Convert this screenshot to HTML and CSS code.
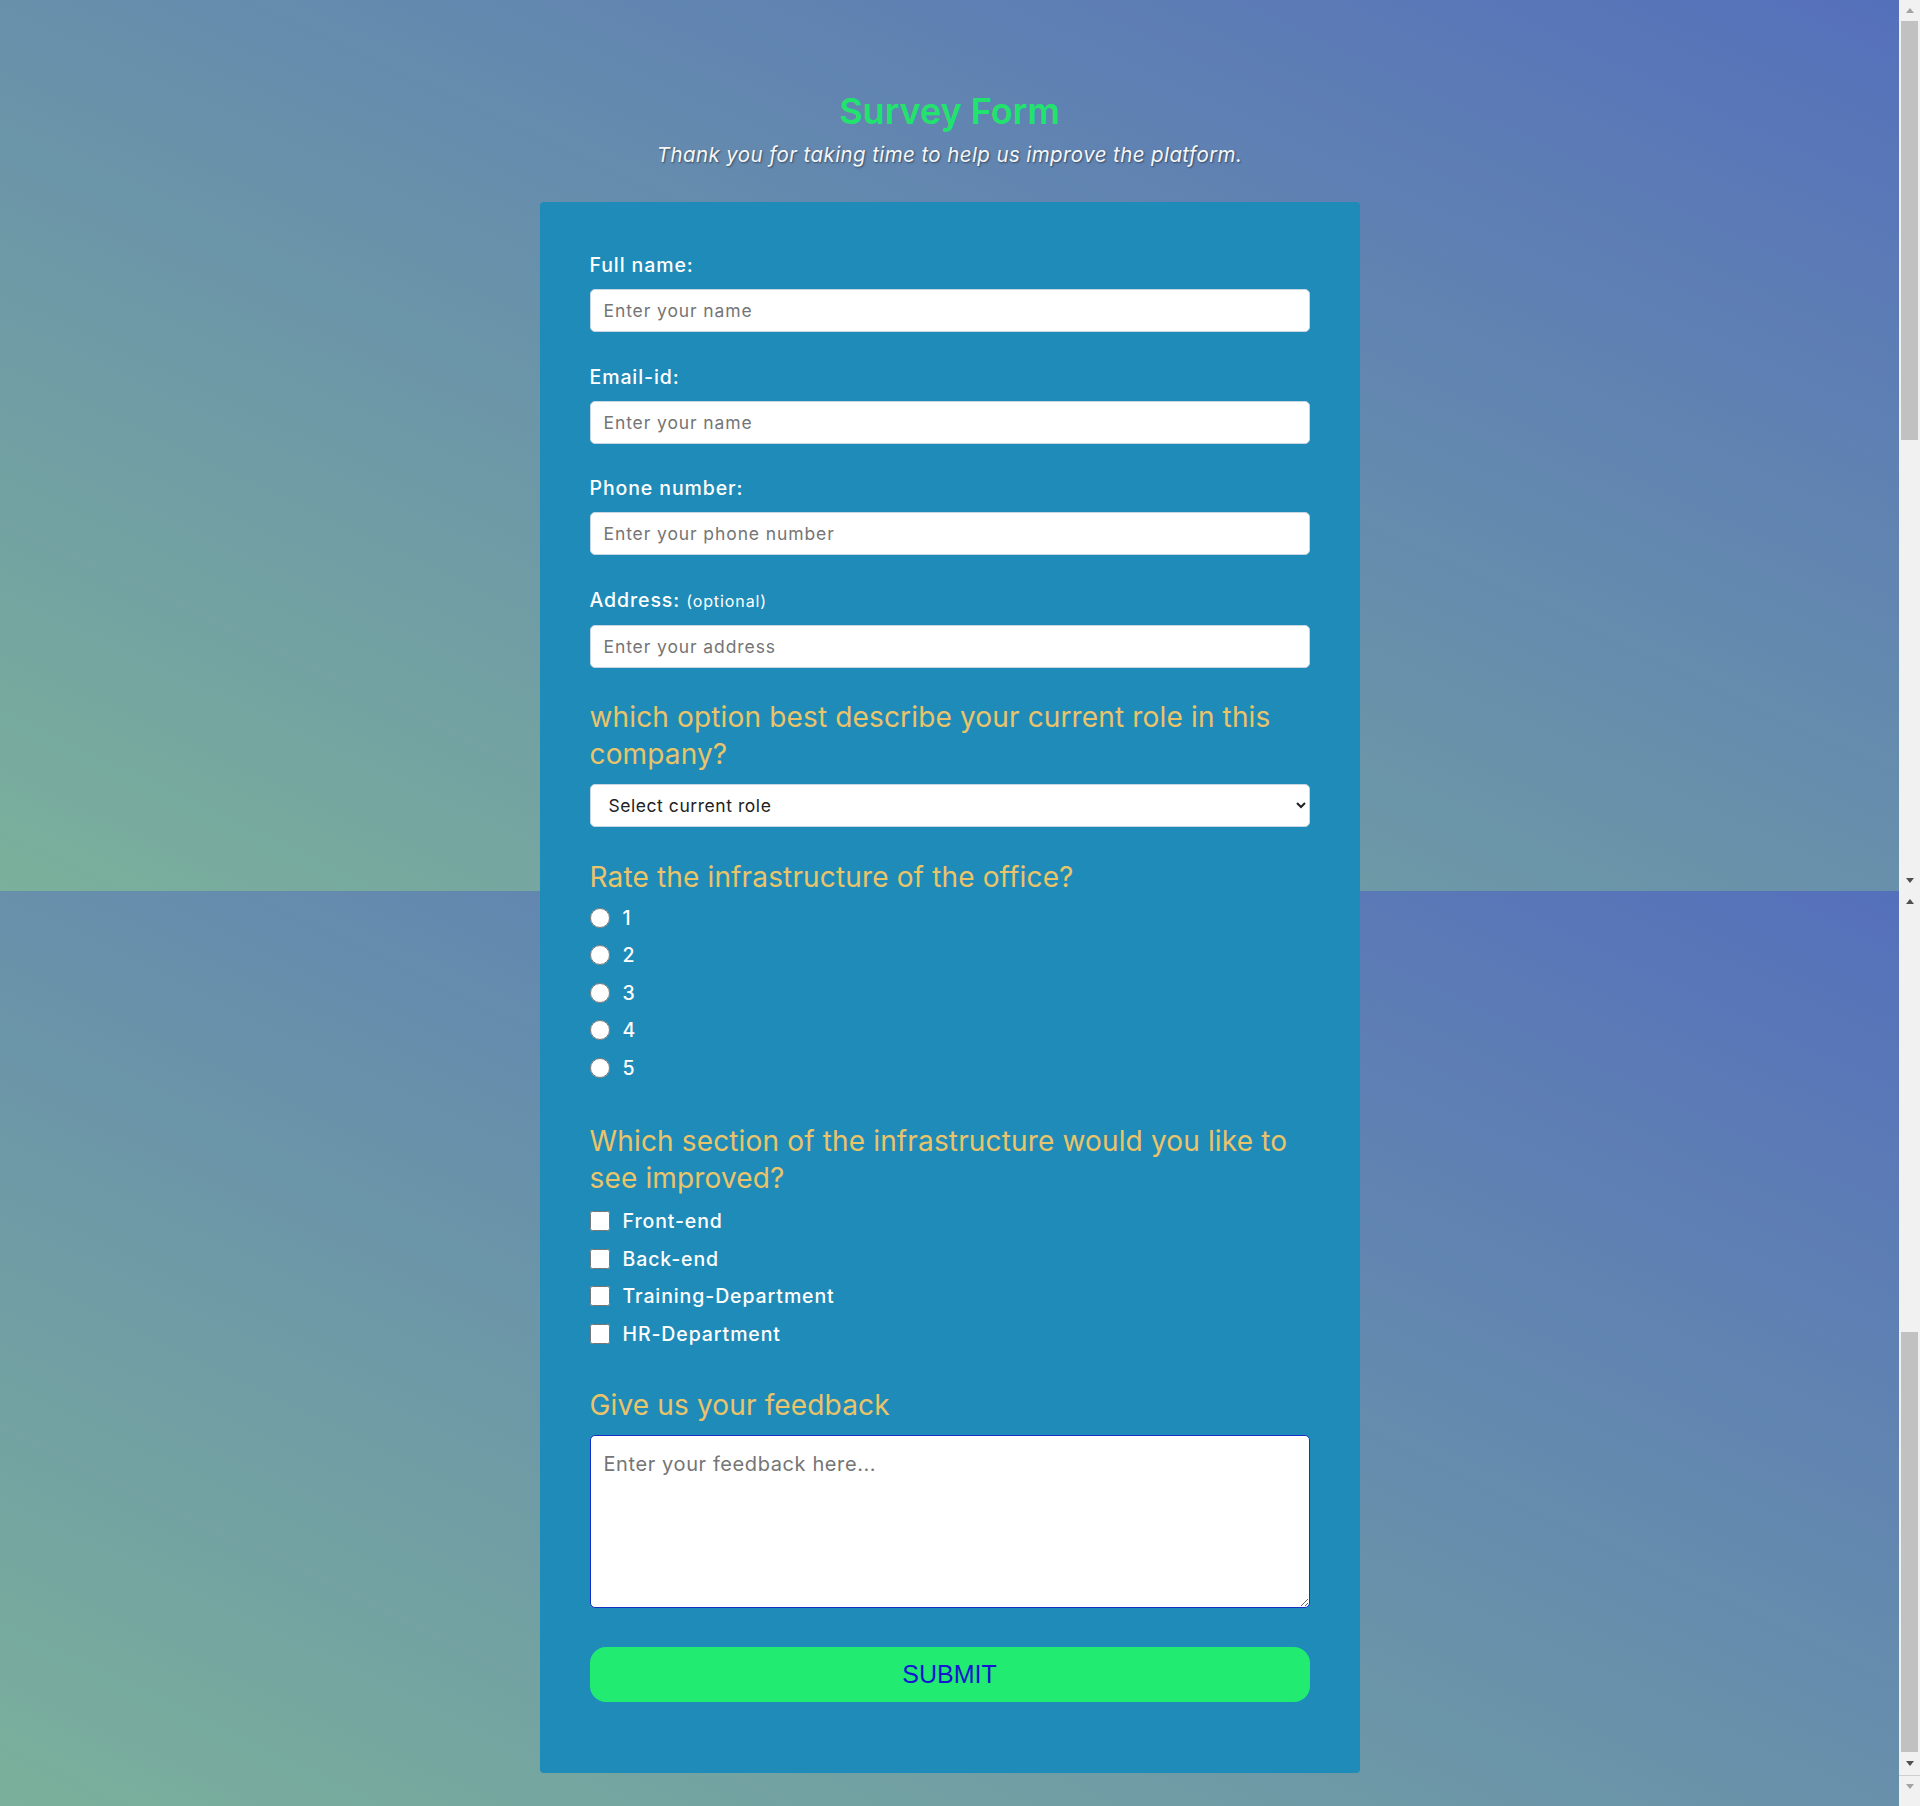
FILE: index.html
```html
<!DOCTYPE html>
<html lang="en">
<head>
<meta charset="utf-8">
<title>Survey Form</title>
<link rel="stylesheet" href="styles.css">
</head>
<body>
<div class="page">
  <main class="main">
    <header class="header">
      <h1 id="title" class="title">Survey Form</h1>
      <p id="description" class="description">Thank you for taking time to help us improve the platform.</p>
    </header>

    <form id="survey-form" class="card">
      <div class="field">
        <label class="label" for="name" id="name-label">Full name:</label>
        <input class="text-input" id="name" type="text" placeholder="Enter your name">
      </div>
      <div class="field">
        <label class="label" for="email" id="email-label">Email-id:</label>
        <input class="text-input" id="email" type="email" placeholder="Enter your name">
      </div>
      <div class="field">
        <label class="label" for="number" id="number-label">Phone number:</label>
        <input class="text-input" id="number" type="text" placeholder="Enter your phone number">
      </div>
      <div class="field">
        <label class="label" for="address">Address: <span class="optional">(optional)</span></label>
        <input class="text-input" id="address" type="text" placeholder="Enter your address">
      </div>

      <div class="question q-select">
        <h2 class="q-title">which option best describe your current role in this company?</h2>
        <select class="select" id="dropdown">
          <option>Select current role</option>
          <option>Student</option>
          <option>Full time job</option>
          <option>Prefer not to say</option>
        </select>
      </div>

      <div class="question q-radio">
        <h2 class="q-title q-title-tight">Rate the infrastructure of the office?</h2>
        <label class="choice"><input class="radio" type="radio" name="rate" value="1"><span>1</span></label>
        <label class="choice"><input class="radio" type="radio" name="rate" value="2"><span>2</span></label>
        <label class="choice"><input class="radio" type="radio" name="rate" value="3"><span>3</span></label>
        <label class="choice"><input class="radio" type="radio" name="rate" value="4"><span>4</span></label>
        <label class="choice"><input class="radio" type="radio" name="rate" value="5"><span>5</span></label>
      </div>

      <div class="question q-check">
        <h2 class="q-title q-title-check">Which section of the infrastructure would you like to see improved?</h2>
        <label class="choice"><input class="check" type="checkbox" value="front-end"><span>Front-end</span></label>
        <label class="choice"><input class="check" type="checkbox" value="back-end"><span>Back-end</span></label>
        <label class="choice"><input class="check" type="checkbox" value="training"><span>Training-Department</span></label>
        <label class="choice"><input class="check" type="checkbox" value="hr"><span>HR-Department</span></label>
      </div>

      <div class="question q-text">
        <h2 class="q-title">Give us your feedback</h2>
        <textarea class="textarea" placeholder="Enter your feedback here..."></textarea>
      </div>

      <button class="submit" type="submit" id="submit">SUBMIT</button>
    </form>
  </main>

  <div class="scrollbar" aria-hidden="true">
    <div class="sb-seg sb-seg-1">
      <div class="sb-btn"><span class="arrow-up arrow-light"></span></div>
      <div class="sb-thumb sb-thumb-1"></div>
      <div class="sb-fill"></div>
      <div class="sb-btn"><span class="arrow-down"></span></div>
    </div>
    <div class="sb-seg sb-seg-2">
      <div class="sb-btn"><span class="arrow-up"></span></div>
      <div class="sb-fill"></div>
      <div class="sb-thumb sb-thumb-2"></div>
      <div class="sb-btn sb-btn-end"><span class="arrow-down"></span></div>
    </div>
    <div class="sb-seg sb-seg-3">
      <div class="sb-btn"><span class="arrow-down arrow-light"></span></div>
    </div>
  </div>
</div>
</body>
</html>
```

FILE: styles.css
```css
html, body {
  margin: 0;
  padding: 0;
}

html {
  overflow: hidden;
}

body {
  font-family: Inter, "Open Sans", "Liberation Sans", sans-serif;
  color: #ffffff;
}

.page {
  display: grid;
  grid-template-columns: 1fr 21px;
  height: 1806px;
}

.main {
  display: flex;
  flex-direction: column;
  align-items: center;
  background:
    linear-gradient(to top right, #7bb09b, #5570bb) 0 0 / 100% 891px no-repeat,
    linear-gradient(to top right, #7bb09b, #5570bb) 0 891px / 100% 915px no-repeat;
}

/* Header */
.header {
  padding-top: 90px;
  text-align: center;
}

.title {
  margin: 0 0 10px;
  font-size: 36px;
  line-height: 43px;
  font-weight: 600;
  color: #22e36e;
}

.description {
  margin: 0;
  font-size: 20.5px;
  line-height: 24px;
  font-style: italic;
  letter-spacing: 0.4px;
  color: #f4f6f8;
  text-shadow: 1px 1px 2px rgba(0, 0, 0, 0.45);
}

/* Card */
.card {
  box-sizing: border-box;
  width: 820px;
  margin-top: 35px;
  padding: 50px 50px 71px;
  background: #1f8bb8;
  border-radius: 4px;
}

.field {
  margin-bottom: 31.5px;
}

.label {
  display: block;
  margin-bottom: 10px;
  font-size: 19.5px;
  line-height: 27px;
  font-weight: 500;
  letter-spacing: 0.9px;
  color: #ffffff;
}

.optional {
  font-size: 16px;
  font-weight: 400;
}

.text-input,
.select,
.textarea {
  display: block;
  box-sizing: border-box;
  width: 100%;
  margin: 0;
  font-family: inherit;
  color: #333333;
  background: #ffffff;
  border-radius: 5px;
}

.text-input {
  height: 43px;
  padding: 0 13px;
  border: 1px solid #c7d6e2;
  font-size: 17.5px;
  letter-spacing: 0.9px;
}

.text-input::placeholder,
.textarea::placeholder {
  color: #757575;
}

.select {
  height: 43px;
  padding: 0 13px 0 14px;
  border: 1px solid #c7d6e2;
  font-size: 17.5px;
  letter-spacing: 0.55px;
  color: #222222;
}

.q-title {
  margin: 0 0 11px;
  font-size: 28px;
  line-height: 37px;
  font-weight: 400;
  letter-spacing: 0.15px;
  color: #e9c46a;
}

.q-title-tight {
  margin-bottom: 3px;
}

.q-title-check {
  margin-bottom: 6px;
}

.q-select {
  margin-bottom: 32px;
}

.q-radio {
  margin-bottom: 36px;
}

.q-check {
  margin-bottom: 34.5px;
}

.choice {
  display: flex;
  align-items: center;
  gap: 13px;
  height: 37.5px;
  font-size: 19.5px;
  font-weight: 500;
  letter-spacing: 0.9px;
  color: #ffffff;
}

.radio,
.check {
  flex: none;
  width: 20px;
  height: 20px;
  margin: 0;
}

.textarea {
  height: 173px;
  padding: 16px 13px;
  border: 1.5px solid #1530c4;
  font-size: 20px;
  letter-spacing: 0.6px;
  resize: vertical;
}

.submit {
  display: block;
  width: 100%;
  height: 55px;
  margin-top: 39px;
  padding: 0;
  border: none;
  border-radius: 16px;
  background: #21eb71;
  color: #1414d2;
  font-family: "Liberation Sans", Arial, sans-serif;
  font-size: 25px;
  cursor: pointer;
}

/* Fake browser scrollbar strips */
.scrollbar {
  display: flex;
  flex-direction: column;
  background: #f1f1f1;
}

.sb-seg {
  display: flex;
  flex-direction: column;
}

.sb-seg-1 {
  height: 891px;
}

.sb-seg-2 {
  height: 884px;
}

.sb-seg-3 {
  flex: 1;
  border-top: 1px solid #cfcfcf;
}

.sb-btn {
  display: flex;
  align-items: center;
  justify-content: center;
  height: 21px;
}

.sb-btn-end {
  height: 23px;
}

.sb-fill {
  flex: 1;
}

.sb-thumb {
  margin: 0 2px;
  background: #c1c1c1;
}

.sb-thumb-1 {
  height: 419px;
}

.sb-thumb-2 {
  height: 420px;
}

.arrow-up,
.arrow-down {
  width: 0;
  height: 0;
  border-left: 4.5px solid transparent;
  border-right: 4.5px solid transparent;
}

.arrow-up {
  border-bottom: 5px solid #505050;
}

.arrow-down {
  border-top: 5px solid #505050;
}

.arrow-up.arrow-light {
  border-bottom-color: #a3a3a3;
}

.arrow-down.arrow-light {
  border-top-color: #a3a3a3;
}
```
